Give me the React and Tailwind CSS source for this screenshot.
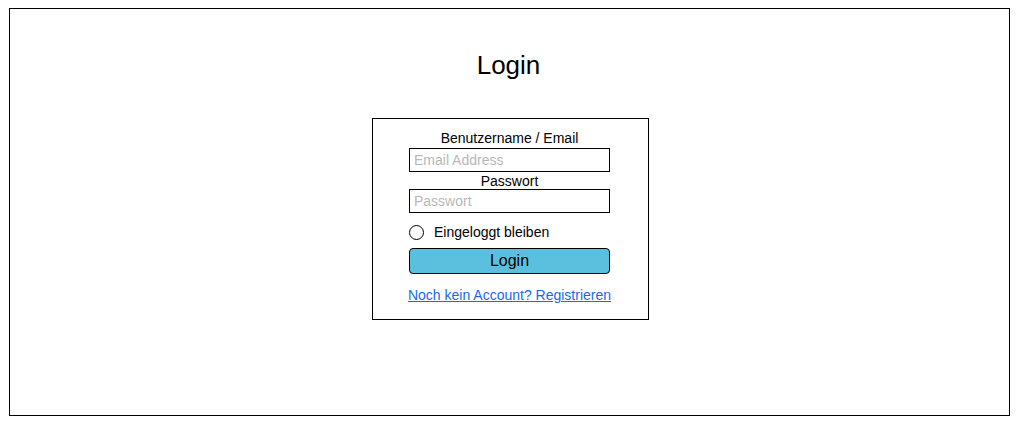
export default function App() {
  return (
    <div className="w-[1019px] h-[428px] bg-white pt-[8px] pl-[9px] font-['Liberation_Sans',Arial,sans-serif] text-black">
      <div className="w-[1001px] h-[408px] border border-black flex flex-col items-center pt-[41px]">
        <h1 className="text-[26px] leading-[30px] mr-[2px]">Login</h1>
        <form
          className="mt-[38px] ml-[2px] w-[277px] border border-black flex flex-col items-center pt-[11px] pb-[16px] pr-[2px]"
          onSubmit={(e) => e.preventDefault()}
        >
          <label className="text-[14px] leading-[16px]" htmlFor="email">
            Benutzername / Email
          </label>
          <input
            id="email"
            type="text"
            placeholder="Email Address"
            className="mt-[2px] w-[201px] h-[24px] border border-black px-[4px] text-[14px] placeholder:text-[#b8b8b8] outline-none"
          />
          <label className="mt-[1px] text-[14px] leading-[16px]" htmlFor="pw">
            Passwort
          </label>
          <input
            id="pw"
            type="password"
            placeholder="Passwort"
            className="w-[201px] h-[24px] border border-black px-[4px] text-[14px] placeholder:text-[#b8b8b8] outline-none"
          />
          <label className="mt-[11px] w-[201px] flex items-center gap-[10px] text-[14px] leading-[16px]">
            <span className="w-[15px] h-[15px] rounded-full border border-black shrink-0" />
            Eingeloggt bleiben
          </label>
          <button
            type="submit"
            className="mt-[8px] w-[201px] h-[26px] bg-[#5bc0de] border border-black rounded-[4px] text-[16px] leading-[18px]"
          >
            Login
          </button>
          <a href="#" className="mt-[13px] text-[14px] leading-[16px] text-[#1a6ae8] underline">
            Noch kein Account? Registrieren
          </a>
        </form>
      </div>
    </div>
  );
}
